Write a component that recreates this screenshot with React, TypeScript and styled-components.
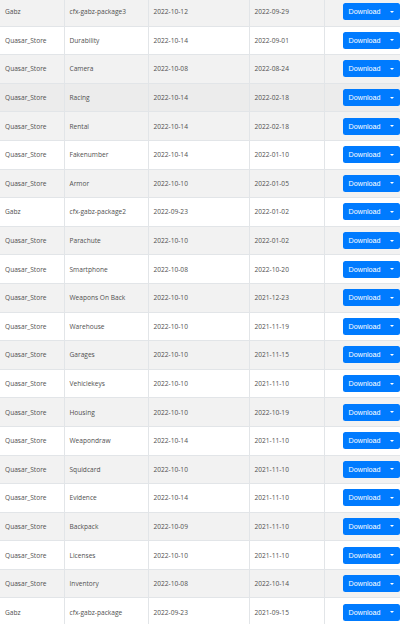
import React from "react";
import styled, { createGlobalStyle } from "styled-components";

const GlobalStyle = createGlobalStyle`
	html, body {
		margin: 0;
		padding: 0;
		background: #ffffff;
		overflow: hidden;
	}
`;

const Page = styled.div`
	width: 100%;
	margin-top: -3px;
`;

const Table = styled.table`
	width: 400px;
	table-layout: fixed;
	border-collapse: collapse;
	font-family: "Open Sans", "Noto Sans", sans-serif;
	font-size: 6.6px;
	color: #505050;
`;

const Row = styled.tr<{ $striped: boolean; $hover?: boolean }>`
	height: 28.6px;
	background: ${(p) => (p.$hover ? "#ececec" : p.$striped ? "#f2f2f2" : "#ffffff")};
`;

const Cell = styled.td`
	padding: 0 5px;
	border: 1px solid #e2e5e8;
	border-left: none;
	vertical-align: middle;
	white-space: nowrap;
	overflow: hidden;
	box-sizing: border-box;
`;

const ActionCell = styled(Cell)`
	padding: 0 0 0 18px;
	border-right: none;
`;

const SplitButton = styled.div`
	display: inline-flex;
	height: 17px;
	border-radius: 2.5px;
	background: #007bff;
	overflow: hidden;
`;

const MainButton = styled.button`
	border: none;
	background: transparent;
	color: #ffffff;
	font-family: "Liberation Sans", Arial, sans-serif;
	font-size: 7.2px;
	padding: 0 6px;
	height: 100%;
	cursor: pointer;
`;

const ToggleButton = styled.button`
	border: none;
	background: transparent;
	height: 100%;
	padding: 0 6px 0 4px;
	display: flex;
	align-items: center;
	cursor: pointer;

	&::after {
		content: "";
		display: block;
		border-top: 2.5px solid #ffffff;
		border-left: 2px solid transparent;
		border-right: 2px solid transparent;
	}
`;

type Resource = {
	author: string;
	name: string;
	updated: string;
	created: string;
};

const resources: Resource[] = [
	{ author: "Gabz", name: "cfx-gabz-package3", updated: "2022-10-12", created: "2022-09-29" },
	{ author: "Quasar_Store", name: "Durability", updated: "2022-10-14", created: "2022-09-01" },
	{ author: "Quasar_Store", name: "Camera", updated: "2022-10-08", created: "2022-08-24" },
	{ author: "Quasar_Store", name: "Racing", updated: "2022-10-14", created: "2022-02-18" },
	{ author: "Quasar_Store", name: "Rental", updated: "2022-10-14", created: "2022-02-18" },
	{ author: "Quasar_Store", name: "Fakenumber", updated: "2022-10-14", created: "2022-01-10" },
	{ author: "Quasar_Store", name: "Armor", updated: "2022-10-10", created: "2022-01-05" },
	{ author: "Gabz", name: "cfx-gabz-package2", updated: "2022-09-23", created: "2022-01-02" },
	{ author: "Quasar_Store", name: "Parachute", updated: "2022-10-10", created: "2022-01-02" },
	{ author: "Quasar_Store", name: "Smartphone", updated: "2022-10-08", created: "2022-10-20" },
	{ author: "Quasar_Store", name: "Weapons On Back", updated: "2022-10-10", created: "2021-12-23" },
	{ author: "Quasar_Store", name: "Warehouse", updated: "2022-10-10", created: "2021-11-19" },
	{ author: "Quasar_Store", name: "Garages", updated: "2022-10-10", created: "2021-11-15" },
	{ author: "Quasar_Store", name: "Vehiclekeys", updated: "2022-10-10", created: "2021-11-10" },
	{ author: "Quasar_Store", name: "Housing", updated: "2022-10-10", created: "2022-10-19" },
	{ author: "Quasar_Store", name: "Weapondraw", updated: "2022-10-14", created: "2021-11-10" },
	{ author: "Quasar_Store", name: "Squidcard", updated: "2022-10-10", created: "2021-11-10" },
	{ author: "Quasar_Store", name: "Evidence", updated: "2022-10-14", created: "2021-11-10" },
	{ author: "Quasar_Store", name: "Backpack", updated: "2022-10-09", created: "2021-11-10" },
	{ author: "Quasar_Store", name: "Licenses", updated: "2022-10-10", created: "2021-11-10" },
	{ author: "Quasar_Store", name: "Inventory", updated: "2022-10-08", created: "2022-10-14" },
	{ author: "Gabz", name: "cfx-gabz-package", updated: "2022-09-23", created: "2021-09-15" },
];

const App: React.FunctionComponent = () => {
	return (
		<Page>
			<GlobalStyle />
			<Table>
				<colgroup>
					<col style={{ width: 64 }} />
					<col style={{ width: 84 }} />
					<col style={{ width: 101 }} />
					<col style={{ width: 75 }} />
					<col style={{ width: 76 }} />
				</colgroup>
				<tbody>
					{resources.map((r, i) => (
						<Row key={r.name} $striped={i % 2 === 0} $hover={r.name === "Racing"}>
							<Cell>{r.author}</Cell>
							<Cell>{r.name}</Cell>
							<Cell>{r.updated}</Cell>
							<Cell>{r.created}</Cell>
							<ActionCell>
								<SplitButton>
									<MainButton>Download</MainButton>
									<ToggleButton aria-label="More options" />
								</SplitButton>
							</ActionCell>
						</Row>
					))}
				</tbody>
			</Table>
		</Page>
	);
};

export default App;
